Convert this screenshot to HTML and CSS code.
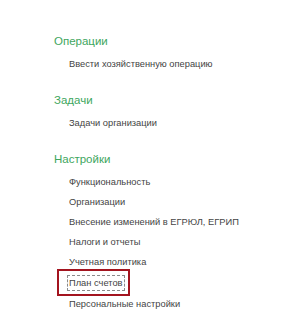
FILE: index.html
```html
<!DOCTYPE html>
<html lang="ru">
<head>
    <meta charset="UTF-8">
    <title>Настройки</title>
    <link rel="stylesheet" href="styles.css">
</head>
<body>
    <div class="panel">
        <div class="group">
            <h2>Операции</h2>
            <a class="item" href="#">Ввести хозяйственную операцию</a>
        </div>

        <div class="group">
            <h2>Задачи</h2>
            <a class="item" href="#">Задачи организации</a>
        </div>

        <div class="group">
            <h2>Настройки</h2>
            <a class="item" href="#">Функциональность</a>
            <a class="item" href="#">Организации</a>
            <a class="item" href="#">Внесение изменений в ЕГРЮЛ, ЕГРИП</a>
            <a class="item" href="#">Налоги и отчеты</a>
            <a class="item" href="#">Учетная политика</a>
            <a class="item focused" href="#">План счетов</a>
            <a class="item" href="#">Персональные настройки</a>
        </div>
    </div>
</body>
</html>
```

FILE: styles.css
```css
* {
    margin: 0;
    padding: 0;
    box-sizing: border-box;
}

body {
    background: #fff;
    font-family: 'Liberation Sans', Arial, sans-serif;
    color: #444;
}

.panel {
    padding: 33px 0 0 54px;
}

.group {
    display: flex;
    flex-direction: column;
    align-items: flex-start;
    margin-bottom: 18px;
}

.group h2 {
    font-size: 11.5px;
    font-weight: normal;
    color: #3ea65e;
    line-height: 16px;
    margin-bottom: 5px;
}

.item {
    font-size: 9.3px;
    line-height: 20px;
    color: #444;
    text-decoration: none;
    margin-left: 15px;
}

/* current item: dotted focus frame plus red highlight over it */
.item.focused {
    position: relative;
    line-height: 14px;
    margin: 3px 0 3px 13px;
    padding: 0 1px;
    border: 1px dashed #8a8a8a;
}

.item.focused::after {
    content: '';
    position: absolute;
    top: -7px;
    left: -11px;
    right: -6px;
    bottom: -6px;
    border: 2px solid #a3141f;
}
```
